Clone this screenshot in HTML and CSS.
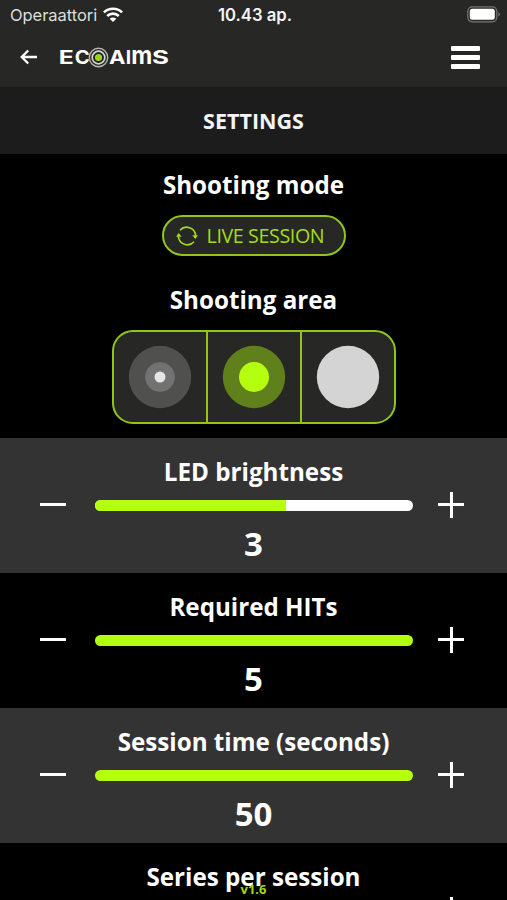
FILE: index.html
```html
<!DOCTYPE html>
<html lang="en">
<head>
<meta charset="utf-8">
<title>EcoAims settings</title>
<link rel="stylesheet" href="styles.css">
</head>
<body>
<div class="app">
  <header class="top">
    <div class="status">
      <div class="carrier"><span class="operator">Operaattori</span>
        <svg width="20" height="16" viewBox="0 0 20 16" fill="none" stroke="#fff" stroke-width="2.7"><path d="M.9 5.400C6 .5 14 .5 19.100 5.400M4.200 8.900C7.500 5.900 12.500 5.900 15.800 8.900"/><path d="M10 14.900L6.700 11.700C8.600 10 11.400 10 13.300 11.700Z" fill="#fff" stroke="none"/></svg>
      </div>
      <span class="clock">10.43 ap.</span>
      <svg class="battery" width="34" height="17" viewBox="0 0 34 17"><rect x=".8" y=".8" width="29" height="15" rx="4.500" fill="none" stroke="#777775" stroke-width="1.200"/><rect x="2.800" y="2.800" width="25" height="11" rx="2.500" fill="#fff"/><path d="M31.300 6v4.600q1.500-.8 1.500-2.300t-1.500-2.300" fill="#777775"/></svg>
    </div>
    <nav class="nav">
      <svg class="back" width="18" height="16" viewBox="0 0 18 16" fill="none" stroke="#fff" stroke-width="2.300"><path d="M17 8H2M8.200 1.500L1.700 8L8.200 14.500"/></svg>
      <svg class="logo" width="112" height="30" viewBox="0 -4 112 30">
        <g class="wordmark">
          <text x="-.2" y="18.400" textLength="15" lengthAdjust="spacingAndGlyphs">E</text>
          <text x="15.800" y="18.400" textLength="15" lengthAdjust="spacingAndGlyphs">C</text>
          <text x="50" y="18.400" textLength="16.500" lengthAdjust="spacingAndGlyphs">A</text>
          <text x="66.700" y="18.400" textLength="5.400" lengthAdjust="spacingAndGlyphs">I</text>
          <text class="tall" x="72.300" y="18.400" textLength="21" lengthAdjust="spacingAndGlyphs">m</text>
          <text x="92.900" y="18.400" textLength="17" lengthAdjust="spacingAndGlyphs">S</text>
        </g>
        <circle cx="39.500" cy="11.500" r="9.200" fill="#272725" stroke="#b5b5b3" stroke-width="1.400"/>
        <circle cx="39.500" cy="11.500" r="6.300" fill="#20201f" stroke="#d4d4d4" stroke-width="1.700"/>
        <circle cx="39.500" cy="11.500" r="3.600" fill="#9bd51b"/>
      </svg>
      <div class="menu"><i></i><i></i><i></i></div>
    </nav>
  </header>
  <h1 class="title">SETTINGS</h1>
  <section class="modes">
    <h2>Shooting mode</h2>
    <button class="live">
      <svg width="22" height="20" viewBox="0 0 22 20" fill="none" stroke="#a5dc1a" stroke-width="1.700"><path d="M4 4.200A9 9 0 0 1 19.600 9.500M18 15.800A9 9 0 0 1 2.400 10.500"/><path d="M16.300 9.300H22L19.300 13ZM0 10.700H5.700L2.700 7Z" fill="#a5dc1a" stroke="none"/></svg>
      <span>LIVE SESSION</span>
    </button>
    <h2 class="area-title">Shooting area</h2>
    <div class="areas">
      <div class="area"><svg width="64" height="64" viewBox="0 0 64 64"><circle cx="32" cy="32" r="31.200" fill="#50504f"/><circle cx="32" cy="32" r="14.800" fill="#727272"/><circle cx="32" cy="32" r="5.500" fill="#e5e5e5"/></svg></div>
      <div class="area"><svg width="64" height="64" viewBox="0 0 64 64"><circle cx="32" cy="32" r="31.200" fill="#60801b"/><circle cx="32" cy="32" r="15" fill="#b4ff0f"/></svg></div>
      <div class="area"><svg width="64" height="64" viewBox="0 0 64 64"><circle cx="32" cy="32" r="31.200" fill="#d4d4d4"/></svg></div>
    </div>
  </section>
  <section class="setting shade">
    <h2>LED brightness</h2>
    <div class="control"><span class="minus"></span><div class="track"><div class="fill" style="width:60%"></div></div><span class="plus"></span></div>
    <output>3</output>
  </section>
  <section class="setting">
    <h2>Required HITs</h2>
    <div class="control"><span class="minus"></span><div class="track"><div class="fill" style="width:100%"></div></div><span class="plus"></span></div>
    <output>5</output>
  </section>
  <section class="setting shade">
    <h2>Session time (seconds)</h2>
    <div class="control"><span class="minus"></span><div class="track"><div class="fill" style="width:100%"></div></div><span class="plus"></span></div>
    <output>50</output>
  </section>
  <section class="setting">
    <h2>Series per session</h2>
    <div class="control"><span class="minus"></span><div class="track"><div class="fill" style="width:100%"></div></div><span class="plus"></span></div>
  </section>
  <div class="version">v1.6</div>
</div>
</body>
</html>
```
FILE: styles.css
```css
* { box-sizing: border-box; }
body { margin: 0; background: #000; color: #fff; font-family: "Open Sans", "Noto Sans", sans-serif; }
.app { position: relative; width: 507px; height: 900px; overflow: hidden; }
.top { height: 87px; background: #272725; }
.status { height: 30px; display: grid; grid-template-columns: 1fr auto 1fr; align-items: center; padding: 0 7px 0 10px; font-family: Inter, sans-serif; }
.carrier { display: flex; align-items: center; gap: 6px; font-size: 16.500px; color: #dededc; }
.operator { letter-spacing: -.05px; }
.clock { font-size: 16.700px; font-weight: 600; color: #f4f4f4; }
.battery { justify-self: end; margin-top: -2px; margin-right: -1px; }
.nav { height: 54px; display: flex; align-items: center; padding: 0 27px 0 20px; }
.logo { margin-left: 21px; }
.wordmark { fill: #fff; font: 700 19px Inter, sans-serif; }
.wordmark .tall { font-size: 24.500px; }
.menu { margin-left: auto; width: 29px; display: grid; gap: 4px; }
.menu i { height: 5px; background: #fff; border-radius: 1px; }
.title { margin: 0; height: 67px; background: #1c1c1c; font-size: 21.500px; line-height: 68px; font-weight: 700; text-align: center; color: #f3f3f3; }
.modes { height: 283.500px; display: flex; flex-direction: column; align-items: center; padding-top: 15px; }
h2 { margin: 0; font-size: 24.200px; line-height: 32px; font-weight: 700; text-align: center; white-space: nowrap; }
.live { margin-top: 14px; width: 184px; height: 41px; padding: 0 12px; display: flex; align-items: center; gap: 9px; border: 2px solid #91c51d; border-radius: 21px; background: #272726; color: #a5dc1a; font: 400 19.700px "Open Sans", sans-serif; letter-spacing: -.4px; white-space: nowrap; }
.area-title { margin-top: 28px; }
.areas { margin: 14px 0 0 1px; width: 284px; height: 94px; display: grid; grid-template-columns: 92px 94px 1fr; border: 2px solid #91c51d; border-radius: 21px; background: #272726; }
.area { display: flex; align-items: center; justify-content: center; }
.area + .area { border-left: 2px solid #91c51d; }
.setting { height: 135px; padding-top: 18px; }
.shade { background: #333; }
.control { height: 26px; margin-top: 4px; display: flex; align-items: center; padding-left: 40px; }
.track { width: 318px; height: 11px; border-radius: 6px; background: #fff; overflow: hidden; margin: 1px 25px 0 29px; }
.fill { height: 100%; background: #b4ff0f; }
.minus { width: 26px; height: 3px; background: #fff; }
.plus { width: 26px; height: 26px; background: linear-gradient(#fff, #fff) center / 26px 3px no-repeat, linear-gradient(#fff, #fff) center / 3px 26px no-repeat; }
output { display: block; margin-top: 6px; font-size: 33px; line-height: 40px; font-weight: 700; text-align: center; }
.version { position: absolute; left: 0; right: 0; bottom: 2px; text-align: center; font-size: 13px; line-height: 18px; font-weight: 700; color: #a1d71d; }
```
